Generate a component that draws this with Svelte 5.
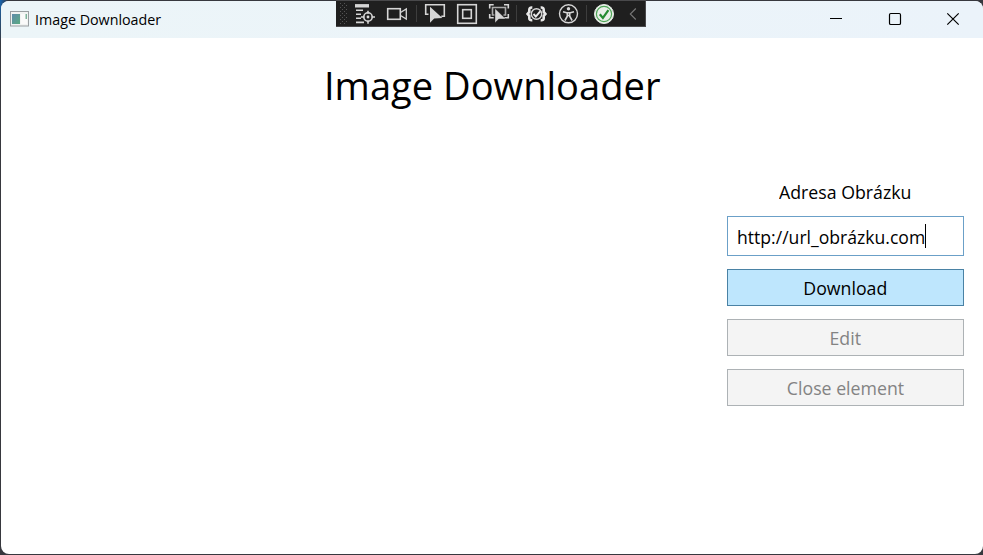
<script>
  let url = $state('http://url_obrázku.com');
</script>

<div class="desktop">
  <div class="window">
    <header>
      <svg class="appicon" width="19" height="16" viewBox="0 0 19 16">
        <defs><linearGradient id="pane" x1="0" y1="0" x2="1" y2="1"><stop stop-color="#5f8bab" /><stop offset="1" stop-color="#5bab82" /></linearGradient></defs>
        <rect x=".5" y=".5" width="18" height="14.5" fill="#f1f3f2" stroke="#9a9fa2" />
        <rect x="2" y="3" width="8" height="10" fill="url(#pane)" />
        <rect x="11" y="3" width="6" height="10" fill="#fafafa" />
        <rect x="15.5" y="3" width="1.5" height="5" fill="#7eb39b" />
      </svg>
      <span class="caption"><span class="t">Image Downloader</span></span>
      <div class="controls">
        <svg width="14" height="14" viewBox="0 0 14 14"><path d="M1 6.5h12" /></svg>
        <svg width="14" height="14" viewBox="0 0 14 14"><rect x="1.5" y="1.5" width="11" height="11" rx="1.3" /></svg>
        <svg width="14" height="14" viewBox="0 0 14 14"><path d="M1.3 1.3l11.4 11.4M12.7 1.3L1.3 12.7" /></svg>
      </div>
    </header>
    <main>
      <h1><span class="t">Image Downloader</span></h1>
      <section>
        <div class="label"><span class="t">Adresa Obrázku</span></div>
        <div class="field"><span class="t">{url}</span><i></i></div>
        <button class="primary"><span class="t">Download</span></button>
        <button disabled><span class="t">Edit</span></button>
        <button disabled><span class="t">Close element</span></button>
      </section>
    </main>
  </div>

  <svg class="debugbar" width="310" height="27" viewBox="336 0 310 27" fill="none" stroke="#d6d6d6" stroke-width="1.6">
    <rect x="336" y="0" width="310" height="27" fill="#1f1f1f" stroke="none" />
    <path d="M336 .5h310M336 26.5h310M645.5 0v27" stroke="#49494b" stroke-width="1" />
    <g stroke="#555" stroke-width="1" stroke-dasharray="1 3"><path d="M340.5 3v22M344.5 3v22" /><path d="M342.5 5v20M346.5 5v20" /></g>
    <path d="M416.5 5v17M516.5 5v17M586.5 5v17" stroke="#3d3d3d" stroke-width="1" />
    <g>
      <path d="M355 5.8h14" stroke-width="3.4" /><path d="M356 10.2h7M356 14.2h5M356 18.2h5M356 22.4h8" />
      <circle cx="368" cy="17" r="4.2" /><circle cx="368" cy="17" r="1.4" fill="#d6d6d6" stroke="none" /><path d="M368 10.8v3M368 20.5v3.3M361 17h3.3M371.7 17h3.3" />
    </g>
    <g><rect x="387.7" y="8.7" width="12.6" height="10.6" /><path d="M400.5 12.5l5.8-3.6v10.2l-5.8-3.6" stroke-width="1.3" /></g>
    <path d="M428.5 14.3h-2.8V4.7h18.6v11.6h-3" />
    <path d="M430 6.8v16l4.2-4.2 8.2-.6z" fill="#d6d6d6" stroke="none" />
    <g><rect x="457.7" y="4.7" width="18.6" height="18.6" /><rect x="462.7" y="9.7" width="8.6" height="8.6" /></g>
    <g>
      <path d="M489.7 8.5V4.7h4M504 4.7h4.3v3.8M489.7 14v3.7h4M504 17.7h4.3V14" /><path d="M494.5 15h-2V7.5h13v7.5h-2" stroke="#aaa" />
      <path d="M495 8.5v14.3l3.8-3.8h7z" fill="#d6d6d6" stroke="#1f1f1f" stroke-width=".4" />
    </g>
    <g>
      <path d="M532.3 7.6c-2.6-.2-3 .8-3 2.3v2l-1.7 2 1.7 2v2.3c0 1.5.5 2.2 3 2M540.7 7.6c2.6-.2 3 .8 3 2.3v2l1.7 2-1.7 2v2.3c0 1.5-.5 2.2-3 2" stroke="#e8e8e8" stroke-width="2.6" />
      <circle cx="536.5" cy="14" r="5.2" fill="#1f1f1f" stroke-width="1.5" /><path d="M533.5 14l2.3 2.5 4.4-5.2" stroke="#e8e8e8" stroke-width="1.9" />
    </g>
    <g>
      <circle cx="568.5" cy="13.8" r="9" stroke-width="1.4" /><circle cx="568.5" cy="8.8" r="1.7" fill="#d6d6d6" stroke="none" />
      <path d="M563 11.8l3.7 1h3.6l3.7-1M567.3 13v3.2l-2.4 4.3M569.7 13v3.2l2.4 4.3M567.2 15.5h2.6" stroke-width="1.6" />
    </g>
    <g><circle cx="604" cy="14" r="9.5" fill="#e8efe8" stroke="#e5ece5" stroke-width="1" /><circle cx="604" cy="14" r="7.6" stroke="#4ea557" stroke-width="1.2" /><path d="M599.8 14.2l3.1 3.7 5.5-7.8" stroke="#258b31" stroke-width="2.2" /></g>
    <path d="M635.8 8.5l-5.5 5.5 5.5 5.5" stroke="#777" stroke-width="1.1" />
  </svg>
</div>

<style>
  :global(body) { margin: 0; background: #33343a; }
  .desktop { position: relative; width: 983px; height: 555px; overflow: hidden; box-sizing: border-box; padding: 1px 0 1px 1px; background: linear-gradient(100deg, #1767b4 0, #37383e 8px); font-family: "Open Sans", "Noto Sans", sans-serif; color: #000; }
  .window { height: 553px; border-radius: 8px; overflow: hidden; background: #fff; }
  .debugbar { position: absolute; left: 336px; top: 0; }
  header { height: 37px; display: flex; align-items: center; padding-left: 9px; background: linear-gradient(90deg, #ecf5f8, #ebf3fa); }
  .t { display: inline-block; white-space: nowrap; }
  .appicon { flex: none; margin-top: -1px; }
  .caption { font-size: 14.5px; line-height: 20px; margin-left: 6px; width: 127px; }
  .caption .t { transform-origin: left; transform: scaleX(.985); }
  .controls { margin-left: auto; margin-right: 23px; padding-bottom: 2px; display: flex; gap: 44.5px; }
  .controls svg { fill: none; stroke: #000; stroke-width: 1.2; }
  main { display: flex; flex-direction: column; }
  h1 { margin: 19px 0 0; height: 56px; line-height: 56px; font-size: 39px; font-weight: 400; text-align: center; }
  h1 .t { transform: scaleX(.977); }
  section { width: 237px; align-self: flex-end; margin: 66px 19px 0 0; font-size: 18.3px; display: flex; flex-direction: column; gap: 13px; }
  .label { height: 24px; line-height: 24px; text-align: center; margin-top: 1px; margin-bottom: -1px; }
  .label .t, button .t { transform: scaleX(.97); }
  .field { height: 40px; box-sizing: border-box; border: 1px solid #6ba0c8; display: flex; align-items: center; padding-left: 9px; }
  .field .t { transform-origin: left; transform: scaleX(.962); }
  .field i { width: 1px; height: 24px; margin-left: -8px; background: #000; }
  button { height: 37px; box-sizing: border-box; padding: 0; border: 1px solid #adb2b5; background: #f4f4f4; color: #838383; font: inherit; line-height: 35px; }
  .primary { color: #000; background: #bee6fd; border-color: #4a82a5; }
</style>
